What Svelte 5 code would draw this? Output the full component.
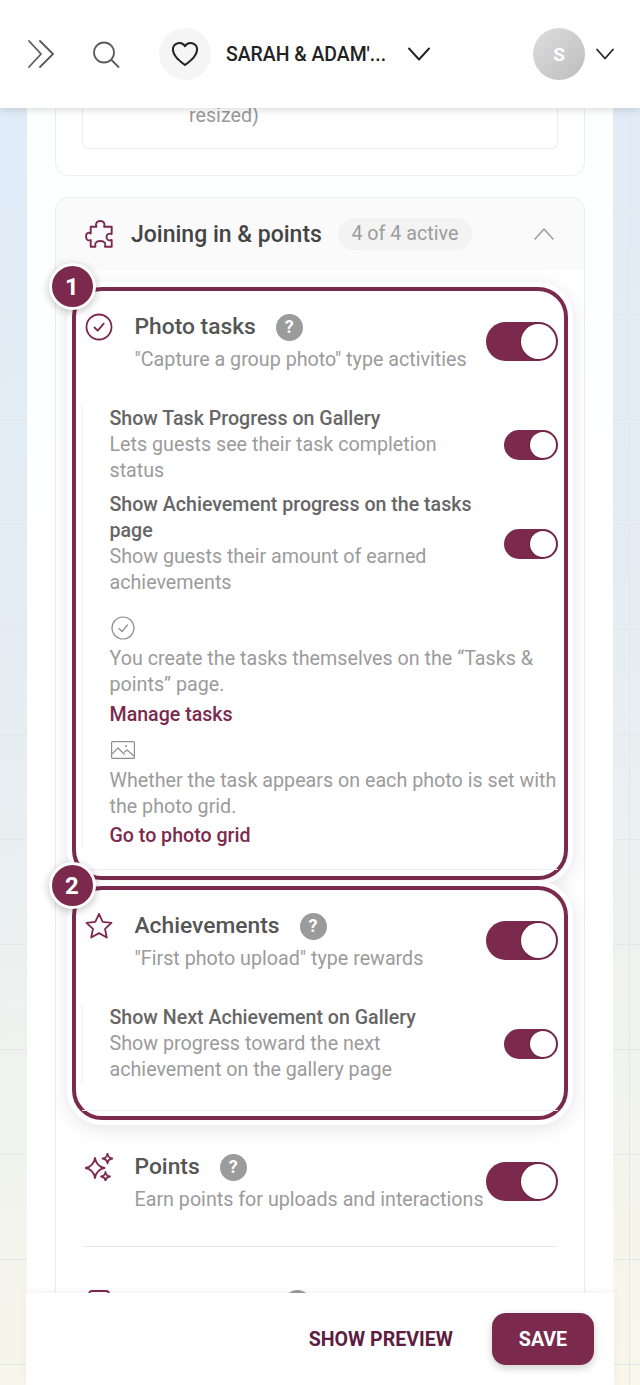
<script>
	const rows1 = [
		{
			title: 'Show Task Progress on Gallery',
			text: 'Lets guests see their task completion status',
		},
		{
			title: 'Show Achievement progress on the tasks page',
			text: 'Show guests their amount of earned achievements',
		},
	];
</script>

<div class="page">
	<header class="top">
		<svg class="ico-chev" viewBox="0 0 26 28" width="26" height="28" fill="none" stroke="#5c5c5c" stroke-width="1.8" stroke-linecap="round" stroke-linejoin="round">
			<path d="M1 1l12 13L1 27M12 1l13 13-13 13" />
		</svg>
		<svg class="ico-search" viewBox="0 0 28 28" width="28" height="28" fill="none" stroke="#5c5c5c" stroke-width="1.8" stroke-linecap="round">
			<circle cx="12" cy="12.5" r="10" />
			<path d="M19.5 20l7 7" />
		</svg>
		<span class="heart-wrap">
			<svg viewBox="0 0 24 24" width="28" height="28" fill="none" stroke="#222" stroke-width="1.7" stroke-linejoin="round">
				<path d="M12 21.5C7 17.5 1.6 13.4 1.6 8A5.6 5.6 0 0 1 12 5.4 5.6 5.6 0 0 1 22.4 8c0 5.4-5.4 9.5-10.4 13.5z" />
			</svg>
		</span>
		<span class="event-name">SARAH &amp; ADAM'...</span>
		<svg class="ico-down" viewBox="0 0 22 14" width="22" height="14" fill="none" stroke="#222" stroke-width="1.9" stroke-linecap="round" stroke-linejoin="round">
			<path d="M1 1.5l10 11 10-11" />
		</svg>
		<span class="avatar">S</span>
		<svg class="ico-down-small" viewBox="0 0 18 12" width="18" height="12" fill="none" stroke="#222" stroke-width="1.7" stroke-linecap="round" stroke-linejoin="round">
			<path d="M1 1.5l8 9 8-9" />
		</svg>
	</header>

	<div class="scroll">
		<main class="panel">
			<div class="card card-prev">
				<div class="inner-box"><span>resized)</span></div>
			</div>

			<div class="card card-main">
				<div class="card-head">
					<svg viewBox="0 0 28 28" width="28" height="28" fill="none" stroke="#7b2a4d" stroke-width="1.9" stroke-linejoin="round">
						<path d="M5.7 6.7h5.8C10.500 4.500 11 1 15.300 1s4.700 3.500 3.700 5.700h7.700V14c-2.700-1-5.200 0-5.200 3s2.500 4 5.200 3v6.700H20c1-2.700 0-5.700-4.700-5.700s-5.800 3-4.800 5.700H5.700V20c-2.200 1-4.700 0-4.700-3.500s2.500-4.500 4.700-3z" />
					</svg>
					<span class="card-title">Joining in &amp; points</span>
					<span class="pill">4 of 4 active</span>
					<svg class="ico-up" viewBox="0 0 20 12" width="20" height="12" fill="none" stroke="#999" stroke-width="1.4" stroke-linecap="round" stroke-linejoin="round">
						<path d="M1 11l9-10 9 10" />
					</svg>
				</div>

				<section class="spot spot-one">
					<span class="num">1</span>
					<div class="feature">
						<svg class="feature-icon" viewBox="0 0 28 28" width="28" height="28" fill="none" stroke="#7b2a4d" stroke-width="1.8" stroke-linecap="round" stroke-linejoin="round">
							<circle cx="14" cy="14" r="12.5" />
							<path d="M9.5 14.5l3.2 3.2 6-7" />
						</svg>
						<div class="feature-text">
							<div class="feature-title">Photo tasks <span class="help">?</span></div>
							<div class="feature-sub">"Capture a group photo" type activities</div>
						</div>
						<span class="toggle"><span class="knob"></span></span>
					</div>

					<div class="subs">
						{#each rows1 as row}
							<div class="sub-row">
								<div class="sub-text">
									<div class="sub-title">{row.title}</div>
									<div class="sub-desc">{row.text}</div>
								</div>
								<span class="toggle small"><span class="knob"></span></span>
							</div>
						{/each}

						<div class="info info-first">
							<svg viewBox="0 0 24 24" width="24" height="24" fill="none" stroke="#8f8f8f" stroke-width="1.2" stroke-linecap="round" stroke-linejoin="round">
								<circle cx="12" cy="12" r="11" />
								<path d="M8 12.5l3 3 5.500-6.500" />
							</svg>
							<p>You create the tasks themselves on the “Tasks &amp; points” page.</p>
							<span class="link">Manage tasks</span>
						</div>
						<div class="info info-second">
							<svg viewBox="0 0 24 18" width="24" height="18" fill="none" stroke="#8f8f8f" stroke-width="1.2" stroke-linejoin="round">
								<rect x="0.6" y="0.6" width="22.8" height="16.8" rx="1" />
								<path d="M1 13l6-6 6.500 6.500M13 11.500l3-2.500 7 6" />
								<circle cx="15" cy="5" r="1" fill="#8f8f8f" stroke="none" />
							</svg>
							<p>Whether the task appears on each photo is set with the photo grid.</p>
							<span class="link">Go to photo grid</span>
						</div>
					</div>
					<div class="rule rule-one"></div>
				</section>

				<section class="spot spot-two">
					<span class="num">2</span>
					<div class="feature">
						<svg class="feature-icon" viewBox="0 0 28 28" width="28" height="28" fill="none" stroke="#7b2a4d" stroke-width="1.8" stroke-linejoin="round">
							<path d="M14 1.800l3.700 8 8.800 1-6.500 6 1.800 8.700L14 21.100l-7.800 4.400L8 16.800l-6.500-6 8.800-1z" />
						</svg>
						<div class="feature-text">
							<div class="feature-title">Achievements <span class="help">?</span></div>
							<div class="feature-sub">"First photo upload" type rewards</div>
						</div>
						<span class="toggle"><span class="knob"></span></span>
					</div>
					<div class="subs">
						<div class="sub-row">
							<div class="sub-text">
								<div class="sub-title">Show Next Achievement on Gallery</div>
								<div class="sub-desc">Show progress toward the next achievement on the gallery page</div>
							</div>
							<span class="toggle small"><span class="knob"></span></span>
						</div>
					</div>
					<div class="rule rule-two"></div>
				</section>

				<div class="feature feature-points">
					<svg class="feature-icon" viewBox="0 0 28 28" width="28" height="28" fill="none" stroke="#7b2a4d" stroke-width="1.8" stroke-linejoin="round">
						<path d="M10 5Q11.500 13.500 19.500 15 11.500 16.500 10 25 8.500 16.500.5 15 8.500 13.500 10 5zM22.500.5Q23 5 27.500 5.500 23 6 22.500 10.500 22 6 17.500 5.500 22 5 22.500.5zM20.500 19Q21 23 25 23.500 21 24 20.500 28 20 24 16 23.500 20 23 20.500 19z" />
					</svg>
					<div class="feature-text">
						<div class="feature-title">Points <span class="help">?</span></div>
						<div class="feature-sub">Earn points for uploads and interactions</div>
					</div>
					<span class="toggle"><span class="knob"></span></span>
				</div>
				<div class="divider"></div>
				<div class="feature feature-next">
					<svg class="feature-icon" viewBox="0 0 28 28" width="28" height="28" fill="none" stroke="#7b2a4d" stroke-width="1.8">
						<rect x="4" y="1" width="20" height="26" rx="3" />
					</svg>
					<span class="help next-help"></span>
				</div>
			</div>
		</main>

		<footer class="actions">
			<span class="preview">SHOW PREVIEW</span>
			<span class="save">SAVE</span>
		</footer>
	</div>
</div>

<style>
	:global(body) {
		margin: 0;
		font-family: Roboto, "Liberation Sans", sans-serif;
	}

	.page {
		width: 640px;
		height: 1385px;
		overflow: hidden;
		display: flex;
		flex-direction: column;
		background-color: #eef4f8;
		background-image:
			linear-gradient(#e0e8ee 1px, transparent 1px),
			linear-gradient(90deg, #e0e8ee 1px, transparent 1px),
			linear-gradient(172deg, #dfecf9 0%, #e5edf3 45%, #f9f7ea 100%);
		background-size:
			105px 105px,
			105px 105px,
			100% 100%;
		background-position:
			0 -1px,
			-1px 0,
			0 0;
	}

	.top {
		flex: none;
		position: relative;
		z-index: 5;
		height: 108px;
		background: #fff;
		box-shadow: 0 2px 8px rgba(0, 0, 0, 0.14);
		display: flex;
		align-items: center;
		padding: 0 26px 0 28px;
		box-sizing: border-box;
	}

	.ico-search {
		margin-left: 38px;
	}

	.heart-wrap {
		margin-left: 39px;
		width: 52px;
		height: 52px;
		border-radius: 50%;
		background: #f5f5f5;
		display: flex;
		align-items: center;
		justify-content: center;
	}

	.event-name {
		margin-left: 15px;
		font-size: 19.4px;
		font-weight: 500;
		color: #222;
		white-space: nowrap;
	}

	.ico-down {
		margin-left: 22px;
	}

	.avatar {
		margin-left: auto;
		width: 52px;
		height: 52px;
		border-radius: 50%;
		background: linear-gradient(135deg, #dedede, #bdbdbd);
		color: #fff;
		font-weight: 700;
		font-size: 19px;
		display: flex;
		align-items: center;
		justify-content: center;
	}

	.ico-down-small {
		margin-left: 11px;
	}

	.scroll {
		flex: 1;
		min-height: 0;
		position: relative;
		overflow: hidden;
	}

	.panel {
		margin-left: 27px;
		width: 586px;
		height: 100%;
		box-sizing: border-box;
		background: rgba(255, 255, 255, 0.97);
		padding: 0 28px;
		display: flex;
		flex-direction: column;
		gap: 21px;
		overflow: hidden;
	}

	.card {
		flex: none;
		border: 1.5px solid #eeeeee;
		border-radius: 14px;
		box-sizing: border-box;
		background: #fff;
	}

	.card-prev {
		height: 85px;
		margin-top: -17px;
		border-top: 0;
		border-top-left-radius: 0;
		border-top-right-radius: 0;
		padding: 0 26px;
	}

	.inner-box {
		height: 58px;
		box-sizing: border-box;
		border: 1.5px solid #ececec;
		border-top: 0;
		border-radius: 0 0 6px 6px;
		padding: 12px 0 0 106px;
		font-size: 19.7px;
		line-height: 26px;
		color: #9a9a9a;
	}

	.card-main {
		border-bottom: 0;
	}

	.card-head {
		height: 72px;
		box-sizing: border-box;
		background: #fafafa;
		border-radius: 14px 14px 0 0;
		display: flex;
		align-items: center;
		padding: 0 30px 0 29px;
	}

	.card-title {
		margin-left: 18px;
		font-size: 23px;
		font-weight: 500;
		color: #444;
		white-space: nowrap;
	}

	.pill {
		margin-left: 16px;
		padding: 0 13.5px;
		height: 32px;
		border-radius: 16px;
		background: #f3f3f3;
		color: #9c9c9c;
		font-size: 19.7px;
		line-height: 32px;
		white-space: nowrap;
	}

	.ico-up {
		margin-left: auto;
	}

	.spot {
		position: relative;
		margin: 17px 16px 0 15.5px;
		border: 4px solid #7b2a4d;
		border-radius: 30px;
		background: #fff;
		box-shadow:
			0 0 0 5px #fff,
			0 4px 20px 5px rgba(0, 0, 0, 0.1);
		box-sizing: border-box;
		padding-right: 6px;
	}

	.spot-one {
		z-index: 1;
	}

	.spot-two {
		margin-top: 6px;
		z-index: 2;
	}

	.num {
		position: absolute;
		z-index: 3;
		left: -27px;
		top: -28px;
		width: 47px;
		height: 47px;
		box-sizing: border-box;
		border-radius: 50%;
		border: 3px solid #fff;
		background: #7b2a4d;
		color: #fff;
		font-size: 24px;
		font-weight: 700;
		display: flex;
		align-items: center;
		justify-content: center;
		box-shadow: 0 2px 8px rgba(0, 0, 0, 0.25);
	}

	.feature {
		display: flex;
		align-items: flex-start;
		padding: 22px 0 0 9px;
		position: relative;
	}

	.feature-icon {
		flex: none;
	}

	.feature-text {
		margin-left: 22px;
		flex: 1;
		min-width: 0;
	}

	.feature-title {
		font-size: 22.8px;
		line-height: 28px;
		font-weight: 500;
		color: #555;
		display: flex;
		align-items: center;
		gap: 20px;
	}

	.feature-sub {
		margin-top: 6px;
		font-size: 19.7px;
		line-height: 26px;
		color: #9b9b9b;
		white-space: nowrap;
	}

	.help {
		display: inline-flex;
		width: 27px;
		height: 27px;
		border-radius: 50%;
		background: #9b9b9b;
		color: #fff;
		font-size: 18px;
		font-weight: 700;
		align-items: center;
		justify-content: center;
	}

	.toggle {
		position: absolute;
		right: 0;
		top: 31px;
		width: 72px;
		height: 39px;
		border-radius: 20px;
		background: #7b2a4d;
		display: block;
	}

	.knob {
		position: absolute;
		right: 2px;
		top: 2px;
		width: 35px;
		height: 35px;
		border-radius: 50%;
		background: #fff;
		box-shadow: 0 0 3px rgba(0, 0, 0, 0.3);
	}

	.toggle.small {
		position: relative;
		top: 0;
		flex: none;
		width: 54px;
		height: 30px;
		border-radius: 15px;
	}

	.toggle.small .knob {
		width: 26px;
		height: 26px;
	}

	.subs {
		margin: 33px 0 0 6px;
		padding-left: 27px;
		border-left: 1px solid #f0f0f0;
	}

	.sub-row {
		display: flex;
		align-items: center;
		gap: 30px;
		justify-content: space-between;
	}

	.sub-row + .sub-row {
		margin-top: 8px;
	}

	.sub-text {
		flex: 1;
		min-width: 0;
	}

	.sub-title {
		font-size: 19.6px;
		line-height: 26px;
		font-weight: 500;
		color: #666;
	}

	.sub-desc {
		font-size: 19.7px;
		line-height: 26px;
		color: #9b9b9b;
	}

	.info svg {
		display: block;
		margin-left: 1px;
	}

	.info p {
		margin: 0;
		font-size: 19.7px;
		line-height: 26px;
		color: #9b9b9b;
	}

	.info-first {
		margin-top: 20px;
	}

	.info-first p {
		margin-top: 6px;
	}

	.info-second {
		margin-top: 13px;
	}

	.info-second p {
		margin-top: 9px;
	}

	.link {
		display: block;
		margin-top: 4px;
		font-size: 19.6px;
		line-height: 26px;
		font-weight: 500;
		color: #7b2a4d;
	}

	.info-second .link {
		margin-top: 3px;
	}

	.rule {
		height: 1px;
		background: #eeeeee;
		margin-left: 6px;
	}

	.rule-one {
		margin-top: 20px;
		margin-bottom: 6px;
	}

	.rule-two {
		margin-top: 27px;
		margin-bottom: 5px;
	}

	.feature-points {
		margin: 0 26.5px 0 28.5px;
		padding: 33px 0 0 0;
	}

	.feature-points .toggle {
		top: 42px;
	}

	.divider {
		height: 1px;
		background: #e8e8e8;
		margin: 33px 27.5px 0 26.5px;
	}

	.feature-next {
		margin: 0 26.5px 0 28.5px;
		padding: 43px 0 0 0;
	}

	.next-help {
		margin-left: 171px;
	}

	.actions {
		position: absolute;
		left: 26px;
		right: 26px;
		bottom: 0;
		height: 92px;
		background: #fff;
		box-shadow: 0 -2px 8px rgba(0, 0, 0, 0.05);
		display: flex;
		align-items: center;
		justify-content: flex-end;
		padding-right: 20px;
		gap: 39px;
		box-sizing: border-box;
	}

	.preview {
		font-size: 19.6px;
		font-weight: 700;
		color: #5e1c3f;
	}

	.save {
		width: 102px;
		height: 52px;
		border-radius: 14px;
		background: #7b2a4d;
		color: #fff;
		font-size: 19.6px;
		font-weight: 700;
		display: flex;
		align-items: center;
		justify-content: center;
		box-shadow: 0 3px 8px rgba(0, 0, 0, 0.2);
	}
</style>
